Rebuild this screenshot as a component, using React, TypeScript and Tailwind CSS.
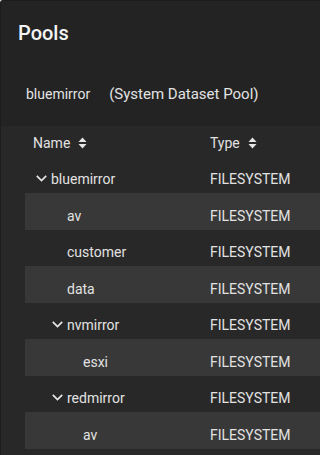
import React from "react";

const Chevron = () => (
  <svg width="16" height="16" viewBox="0 0 16 16" className="shrink-0 -mt-[3px]" fill="none">
    <path d="M1.8 5.8 L6.5 10.5 L11.2 5.8" stroke="#e6e6e6" strokeWidth="1.7" />
  </svg>
);

const SortIcon = () => (
  <svg width="9" height="12" viewBox="0 0 9 12" className="ml-[8px]" fill="#e6e6e6">
    <path d="M4.5 0.5 L8.5 5 L0.5 5 Z" />
    <path d="M4.5 11.5 L8.5 7 L0.5 7 Z" />
  </svg>
);

type Row = { name: string; level: number; parent: boolean };

const rows: Row[] = [
  { name: "bluemirror", level: 0, parent: true },
  { name: "av", level: 1, parent: false },
  { name: "customer", level: 1, parent: false },
  { name: "data", level: 1, parent: false },
  { name: "nvmirror", level: 1, parent: true },
  { name: "esxi", level: 2, parent: false },
  { name: "redmirror", level: 1, parent: true },
  { name: "av", level: 2, parent: false },
];

export default function App() {
  return (
    <div
      className="w-[320px] h-[455px] overflow-hidden bg-[#232323] border-l border-t border-[#1c1c1c] rounded-tl-[3px] text-[#e2e2e2] flex flex-col"
      style={{ fontFamily: "Roboto, 'Liberation Sans', sans-serif" }}
    >
      <div className="h-[125px] shrink-0 flex flex-col">
        <div className="pl-[17px] pt-[19px] text-[20px] leading-[26px] font-medium text-[#f4f4f4]">Pools</div>
        <div className="pl-[25px] mt-[38px] text-[14px] leading-[20px] flex items-baseline">
          <span>bluemirror</span>
          <span className="ml-[19px] text-[15px]">(System Dataset Pool)</span>
        </div>
      </div>
      <div className="flex-1 bg-[#282828] pl-[24px]">
        <div className="h-[31px] flex items-center text-[14px] pt-[3px]">
          <div className="w-[185px] pl-[8px] flex items-center">
            <span>Name</span>
            <SortIcon />
          </div>
          <div className="flex items-center">
            <span>Type</span>
            <SortIcon />
          </div>
        </div>
        {rows.map((r, i) => (
          <div
            key={i}
            className={
              "flex items-center text-[14px] pt-[9px] " +
              (i % 2 === 1 ? "bg-[#383838] h-[37px]" : "h-[36px]")
            }
          >
            <div className="w-[185px] pl-[10px] flex items-center">
              <div style={{ width: r.level * 16 }} className="shrink-0" />
              {r.parent ? <Chevron /> : <div className="w-[16px] shrink-0" />}
              <span>{r.name}</span>
            </div>
            <div>FILESYSTEM</div>
          </div>
        ))}
      </div>
    </div>
  );
}
